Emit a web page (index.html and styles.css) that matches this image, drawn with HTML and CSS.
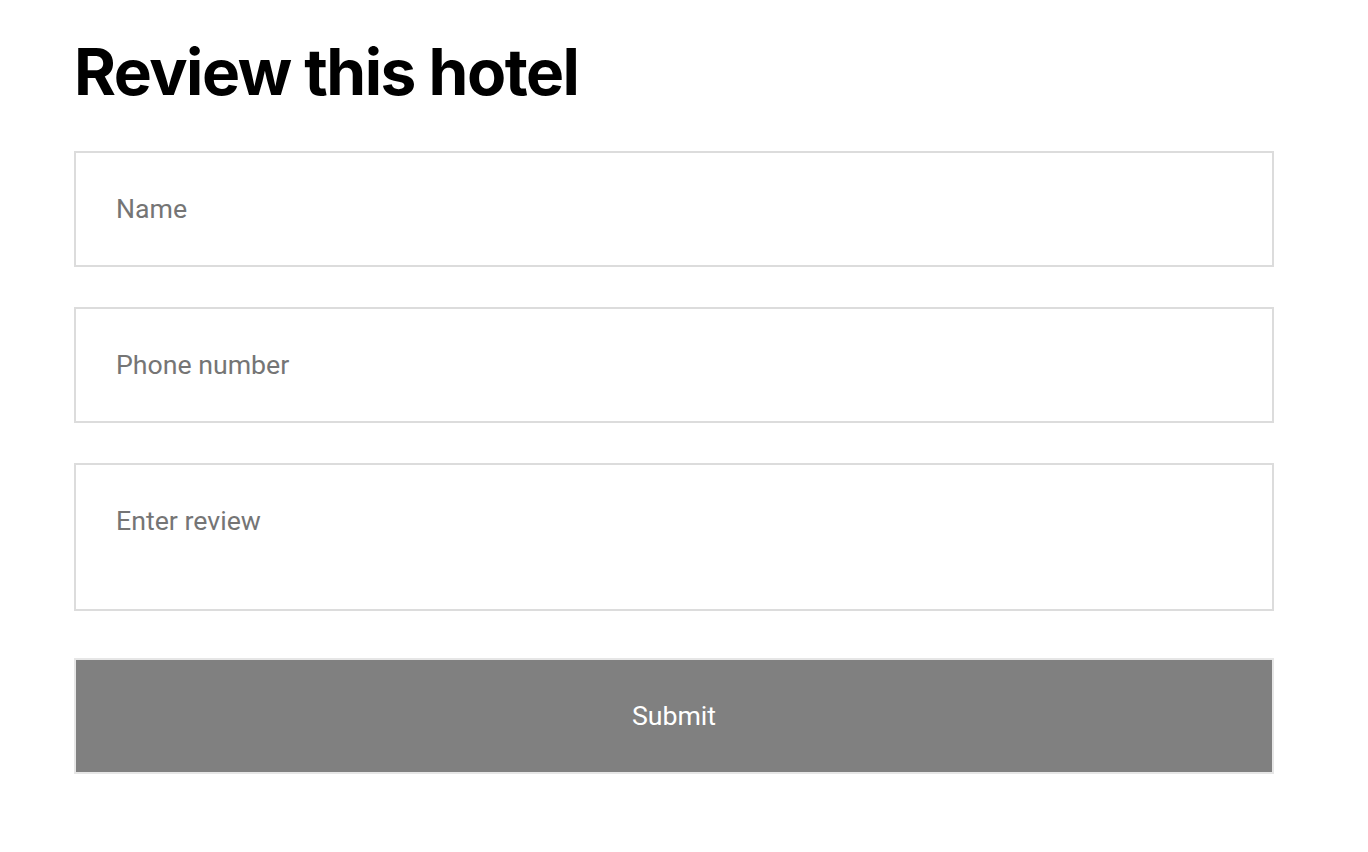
FILE: index.html
```html
<!DOCTYPE html>
<html lang="en">
<head>
<meta charset="utf-8">
<title>Review this hotel</title>
<link rel="stylesheet" href="styles.css">
</head>
<body>
<main class="page">
  <h1 class="title">Review this hotel</h1>
  <form class="form">
    <input class="field" type="text" placeholder="Name">
    <input class="field" type="tel" placeholder="Phone number">
    <textarea class="field area" placeholder="Enter review"></textarea>
    <button class="submit" type="button">Submit</button>
  </form>
</main>
</body>
</html>
```

FILE: styles.css
```css
html, body {
  margin: 0;
  padding: 0;
  background: #fff;
}
.page {
  width: 1200px;
  padding: 30px 0 0 74px;
  font-family: Roboto, "Liberation Sans", sans-serif;
}
.title {
  font-family: Inter, "Liberation Sans", sans-serif;
  font-weight: 700;
  font-size: 64px;
  letter-spacing: -1.5px;
  line-height: 84px;
  margin: 0 0 37px;
  color: #000;
}
.form {
  display: flex;
  flex-direction: column;
  gap: 40px;
}
.field {
  box-sizing: border-box;
  width: 1200px;
  height: 116px;
  border: 2px solid #dcdcdc;
  padding: 0 40px;
  font-family: Roboto, "Liberation Sans", sans-serif;
  font-size: 26.7px;
  color: #222;
  background: #fff;
  outline: none;
  margin: 0;
}
.field::placeholder {
  color: #757575;
}
.area {
  height: 148px;
  padding-top: 38px;
  resize: none;
  line-height: 36px;
}
.submit {
  box-sizing: border-box;
  width: 1200px;
  height: 116px;
  margin-top: 7px;
  border: 2px solid #e6e6e6;
  background: #808080;
  color: #fff;
  font-family: Roboto, "Liberation Sans", sans-serif;
  font-size: 26.7px;
  cursor: pointer;
}
```
